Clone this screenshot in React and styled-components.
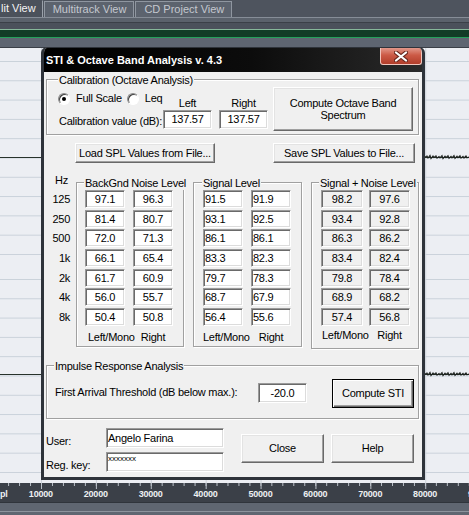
import React from 'react';
import styled, { createGlobalStyle } from 'styled-components';

const GlobalStyle = createGlobalStyle`
  html, body { margin: 0; padding: 0; overflow: hidden; background: #4f555f; }
  body { font-family: "Liberation Sans", Arial, sans-serif; }
`;

// data
const bands = ['125', '250', '500', '1k', '2k', '4k', '8k'];
const noise = [['97.1', '96.3'], ['81.4', '80.7'], ['72.0', '71.3'], ['66.1', '65.4'], ['61.7', '60.9'], ['56.0', '55.7'], ['50.4', '50.8']];
const signal = [['91.5', '91.9'], ['93.1', '92.5'], ['86.1', '86.1'], ['83.3', '82.3'], ['79.7', '78.3'], ['68.7', '67.9'], ['56.4', '55.6']];
const sumLevel = [['98.2', '97.6'], ['93.4', '92.8'], ['86.3', '86.2'], ['83.4', '82.4'], ['79.8', '78.4'], ['68.9', '68.2'], ['57.4', '56.8']];
const marks = [10000, 20000, 30000, 40000, 50000, 60000, 70000, 80000, 90000];

function Dialog() {
  return (
    <Window>
      <TitleBar>
        <TitleText>STI &amp; Octave Band Analysis v. 4.3</TitleText>
        <CloseBox>
          <svg width="14" height="11" viewBox="0 0 14 11">
            <path d="M2 1.5 L12 9.5 M12 1.5 L2 9.5" stroke="#6b2a20" strokeWidth="4.2" strokeLinecap="round" />
            <path d="M2 1.5 L12 9.5 M12 1.5 L2 9.5" stroke="#fff" strokeWidth="2.2" strokeLinecap="round" />
          </svg>
        </CloseBox>
      </TitleBar>

      <Body>
        <Group>
          <Legend $indent={11}>Calibration (Octave Analysis)</Legend>
          <CalibRow>
            <CalibGrid>
              <RadioRow>
                <RadioOption><Radio $checked />Full Scale</RadioOption>
                <RadioOption><Radio />Leq</RadioOption>
              </RadioRow>
              <ColHead>Left</ColHead>
              <ColHead>Right</ColHead>
              <RowLabel>Calibration value (dB):</RowLabel>
              <Field $h={19}>137.57</Field>
              <Field $h={19}>137.57</Field>
            </CalibGrid>
            <Button $w={140} $h={44} $lh={12.5}>Compute Octave Band<br />Spectrum</Button>
          </CalibRow>
        </Group>

        <FileRow>
          <Button $w={140} $h={20} $ml={29}>Load SPL Values from File...</Button>
          <Button $w={142} $h={20} $ml={58}>Save SPL Values to File...</Button>
        </FileRow>

        <Table>
          <HzCol>
            <HzHead>Hz</HzHead>
            {bands.map((b) => <HzCell key={b}>{b}</HzCell>)}
          </HzCol>

          <Group $w={108}>
            <Legend>BackGnd Noise Level</Legend>
            <ValueGrid $cols="40px 40px" $gap={8} $pl={8} $pr={10}>
              {noise.map(([l, r], i) => (
                <React.Fragment key={i}>
                  <Field>{l}</Field>
                  <Field>{r}</Field>
                </React.Fragment>
              ))}
              <ColFoot $shift={3}>Left/Mono</ColFoot>
              <ColFoot>Right</ColFoot>
            </ValueGrid>
          </Group>

          <Group $w={109} $ml={9}>
            <Legend $indent={8}>Signal Level</Legend>
            <ValueGrid $cols="40px 40px" $gap={8} $pl={9} $pr={10}>
              {signal.map(([l, r], i) => (
                <React.Fragment key={i}>
                  <Field $align="left">{l}</Field>
                  <Field $align="left">{r}</Field>
                </React.Fragment>
              ))}
              <ColFoot>Left/Mono</ColFoot>
              <ColFoot>Right</ColFoot>
            </ValueGrid>
          </Group>

          <Group $w={108} $ml={9}>
            <Legend>Signal + Noise Level</Legend>
            <ValueGrid $cols="42px 41px" $gap={6} $pl={9} $pr={8}>
              {sumLevel.map(([l, r], i) => (
                <React.Fragment key={i}>
                  <Field $readonly>{l}</Field>
                  <Field $readonly>{r}</Field>
                </React.Fragment>
              ))}
              <ColFoot $shift={1} $up>Left/Mono</ColFoot>
              <ColFoot $up>Right</ColFoot>
            </ValueGrid>
          </Group>
        </Table>

        <Group $mt={16}>
          <Legend>Impulse Response Analysis</Legend>
          <ImpulseRow>
            <ImpulseLabel>First Arrival Threshold (dB below max.):</ImpulseLabel>
            <Field $h={20} $w={49}>-20.0</Field>
            <Button $w={82} $h={29} $ml={25} $default>Compute STI</Button>
          </ImpulseRow>
        </Group>

        <Footer>
          <UserGrid>
            <UserLabel>User:</UserLabel>
            <Field $h={20} $align="left">Angelo Farina</Field>
            <UserLabel>Reg. key:</UserLabel>
            <KeyField $h={20} $align="left">xxxxxxx</KeyField>
          </UserGrid>
          <Button $w={83} $h={29} $ml={17} $mt={6}>Close</Button>
          <Button $w={83} $h={29} $ml={7} $mt={6}>Help</Button>
        </Footer>
      </Body>
    </Window>
  );
}

function Channel() {
  return (
    <Track>
      <Noise viewBox="0 0 44 6" preserveAspectRatio="none">
        <polyline
          points="0,3 2,2 3,4 5,1.5 6,4.5 8,2 9,3.5 11,1.8 12,4.2 14,2.5 15,3.8 17,1.5 18,4.6 20,2.2 21,3.6 23,1.7 24,4.3 26,2.4 27,3.9 29,1.6 30,4.4 32,2.1 33,3.7 35,1.8 36,4.1 38,2.3 39,4 41,1.9 42,3.8 44,3"
          fill="none"
          stroke="#1c211d"
          strokeWidth="1.1"
        />
      </Noise>
    </Track>
  );
}

export default function App() {
  return (
    <>
      <GlobalStyle />
      <Screen>
        <TabBar>
          <Tab $active>lit View</Tab>
          <Tab>Multitrack View</Tab>
          <Tab>CD Project View</Tab>
        </TabBar>
        <Strip $h={4} $bg="#5b626c" />
        <Strip $h={7} $bg="#4b515b" $top="#3b4048" />
        <GreenStrip />
        <Strip $h={10} $bg="#5e6571" $bottom="#3a3f47" />
        <Wave>
          <Channel />
          <Channel />
        </Wave>
        <Ruler>
          <RulerCell $first>pl</RulerCell>
          {marks.map((m) => <RulerCell key={m}>{m}</RulerCell>)}
        </Ruler>
        <BottomBar />
        <Dialog />
      </Screen>
    </>
  );
}

// ---------- background app ----------
const Screen = styled.div`
  position: relative;
  width: 469px;
  height: 515px;
  display: flex;
  flex-direction: column;
  overflow: hidden;
  background: #4f555f;
`;

const TabBar = styled.div`
  height: 17px;
  display: flex;
  align-items: flex-end;
  gap: 1px;
  background: #4e545e;
  border-bottom: 1px solid #868d97;
`;

const Tab = styled.div`
  box-sizing: border-box;
  height: ${(p) => (p.$active ? 17 : 16)}px;
  padding: ${(p) => (p.$active ? '0 6px 0 0' : '0 7px 0 8px')};
  font-size: 11px;
  line-height: 15px;
  white-space: nowrap;
  color: ${(p) => (p.$active ? '#f4f4f4' : '#c4c8ce')};
  background: ${(p) => (p.$active ? '#4b515b' : '#5c636e')};
  border: 1px solid;
  border-bottom: none;
  border-color: ${(p) => (p.$active ? 'transparent #9aa1aa transparent transparent' : '#8f96a0')};
`;

const Strip = styled.div`
  box-sizing: border-box;
  height: ${(p) => p.$h}px;
  background: ${(p) => p.$bg};
  border-top: ${(p) => (p.$top ? `1px solid ${p.$top}` : 'none')};
  border-bottom: ${(p) => (p.$bottom ? `1px solid ${p.$bottom}` : 'none')};
`;

const GreenStrip = styled.div`
  box-sizing: border-box;
  height: 9px;
  background: #123c27;
  border-top: 1px solid #86b79a;
  border-bottom: 1px solid #25a05c;
`;

const Wave = styled.div`
  flex: 1;
  display: flex;
  flex-direction: column;
`;

const Track = styled.div`
  position: relative;
  flex: 1;
  background-color: #eceef3;
  background-image:
    linear-gradient(to right, #cdd2da 0 1px, transparent 1px),
    linear-gradient(to bottom, #c9d1da 0 1px, transparent 1px);
  background-size: 54.9px 100%, 100% 19.3px;
  background-position: 41px 0, 0 13px;

  &::after {
    content: '';
    position: absolute;
    left: 0;
    right: 0;
    top: 50%;
    height: 1px;
    background: #27322b;
  }
`;

const Noise = styled.svg`
  position: absolute;
  right: 0;
  top: calc(50% - 3px);
  width: 44px;
  height: 6px;
  z-index: 1;
`;

const Ruler = styled.div`
  box-sizing: border-box;
  height: 19px;
  display: flex;
  padding-top: 5px;
  background-color: #3b4048;
  background-image:
    linear-gradient(to right, #b9bfc7 0 1px, transparent 1px),
    linear-gradient(to right, #b9bfc7 0 1px, transparent 1px);
  background-size: 54.9px 6px, 10.98px 3px;
  background-position: 41px 0, 41px 0;
  background-repeat: repeat-x;
  font-size: 9px;
  font-weight: bold;
  letter-spacing: -0.2px;
  color: #eef0f2;
  line-height: 12px;
`;

const RulerCell = styled.div`
  flex: 0 0 ${(p) => (p.$first ? '13.45px' : '54.9px')};
  text-align: ${(p) => (p.$first ? 'left' : 'center')};
  white-space: nowrap;
`;

const BottomBar = styled.div`
  height: 13px;
  background: linear-gradient(to bottom, #5f6671 0 8px, #8d949d 8px 9px, #5f6671 9px);
  border-top: 1px solid #2f343b;
  box-sizing: border-box;
`;

// ---------- dialog ----------
const Window = styled.div`
  position: absolute;
  left: 41px;
  top: 47px;
  width: 384px;
  height: 433px;
  box-sizing: border-box;
  display: flex;
  flex-direction: column;
  border: 3px solid #2e333a;
  border-top-width: 1px;
  border-radius: 6px 6px 0 0;
  background: #f0f0f0;
  font-size: 11px;
  letter-spacing: -0.25px;
  color: #000;
  overflow: hidden;
`;

const TitleBar = styled.div`
  height: 24px;
  display: flex;
  justify-content: space-between;
  align-items: flex-start;
  padding-left: 2px;
  background: linear-gradient(to right, #000 0%, #0c0c0c 55%, #2a2a2a 100%);
`;

const TitleText = styled.div`
  margin-top: 6px;
  color: #fff;
  font-weight: bold;
  font-size: 11px;
  letter-spacing: 0;
  white-space: nowrap;
`;

const CloseBox = styled.div`
  width: 42px;
  height: 17px;
  box-sizing: border-box;
  display: flex;
  align-items: center;
  justify-content: center;
  border: 1px solid #f1c6bd;
  border-top: none;
  border-radius: 0 0 3px 3px;
  background: linear-gradient(to bottom, #e2988a 0%, #cc5a46 45%, #b13d2a 100%);
`;

const Body = styled.div`
  flex: 1;
  display: flex;
  flex-direction: column;
  padding: 7px 3px 0 2px;
`;

const Group = styled.div`
  box-sizing: border-box;
  display: flex;
  flex-direction: column;
  width: ${(p) => (p.$w ? `${p.$w}px` : 'auto')};
  margin-left: ${(p) => p.$ml || 0}px;
  margin-top: ${(p) => p.$mt || 0}px;
  border: 1px solid #a0a0a0;
  box-shadow: inset 1px 1px 0 #fff, 1px 1px 0 #fff;
`;

const Legend = styled.div`
  align-self: flex-start;
  height: 14px;
  line-height: 14px;
  margin: -7px 0 0 ${(p) => (p.$indent ?? 7)}px;
  padding: 0 1px;
  background: #f0f0f0;
  white-space: nowrap;
  position: relative;
`;

const CalibRow = styled.div`
  display: flex;
  gap: 5px;
  padding: 0 4px 3px 12px;
`;

const CalibGrid = styled.div`
  width: 209px;
  display: grid;
  grid-template-columns: 97px 49px 49px;
  grid-template-rows: 23px 19px;
  column-gap: 7px;
`;

const RadioRow = styled.div`
  display: flex;
  gap: 5px;
  margin-top: 5px;
  height: 13px;
  white-space: nowrap;
  margin-left: -1px;
`;

const RadioOption = styled.div`
  display: flex;
  align-items: center;
  gap: 6px;
  line-height: 13px;
`;

const Radio = styled.span`
  position: relative;
  width: 12px;
  height: 12px;
  box-sizing: border-box;
  border-radius: 50%;
  border: 1px solid;
  border-color: #8a8a8a #fff #fff #8a8a8a;
  box-shadow: inset 1px 1px 0 #404040;
  background: #fff;

  &::after {
    content: '';
    display: ${(p) => (p.$checked ? 'block' : 'none')};
    position: absolute;
    left: 3px;
    top: 3px;
    width: 4px;
    height: 4px;
    border-radius: 50%;
    background: #000;
  }
`;

const ColHead = styled.div`
  align-self: end;
  text-align: center;
  line-height: 13px;
`;

const RowLabel = styled.div`
  line-height: 19px;
  padding-top: 2px;
  white-space: nowrap;
`;

const Field = styled.div`
  box-sizing: border-box;
  height: ${(p) => p.$h || 18}px;
  width: ${(p) => (p.$w ? `${p.$w}px` : 'auto')};
  padding: 0 ${(p) => (p.$align === 'left' ? 1 : 2)}px;
  border: 1px solid;
  border-color: #9a9a9a #fff #fff #9a9a9a;
  box-shadow: inset 1px 1px 0 #6a6a6a, inset -1px -1px 0 #dcdcdc;
  background: ${(p) => (p.$readonly ? '#f0f0f0' : '#fff')};
  text-align: ${(p) => p.$align || 'center'};
  line-height: ${(p) => (p.$h || 18) - 2}px;
  white-space: nowrap;
  overflow: hidden;
`;

const KeyField = styled(Field)`
  font-size: 8px;
  line-height: 10px;
  letter-spacing: 0;
  padding-top: 1px;
`;

const Button = styled.button`
  box-sizing: border-box;
  flex: none;
  width: ${(p) => p.$w}px;
  height: ${(p) => p.$h}px;
  margin: ${(p) => p.$mt || 0}px 0 0 ${(p) => p.$ml || 0}px;
  padding: 0;
  font: inherit;
  font-size: 11px;
  letter-spacing: -0.25px;
  line-height: ${(p) => p.$lh || 13}px;
  color: #000;
  background: #f0f0f0;
  border: 1px solid;
  border-color: ${(p) => (p.$default ? '#000' : '#fff #696969 #696969 #fff')};
  box-shadow: ${(p) =>
    p.$default
      ? 'inset 1px 1px 0 #fff, inset -1px -1px 0 #696969, inset -2px -2px 0 #a0a0a0'
      : 'inset -1px -1px 0 #a0a0a0, inset 1px 1px 0 #e3e3e3'};
  white-space: nowrap;
`;

const FileRow = styled.div`
  display: flex;
  margin-top: 8px;
`;

const Table = styled.div`
  display: flex;
  align-items: flex-start;
  margin-top: 19px;
`;

const HzCol = styled.div`
  box-sizing: border-box;
  width: 30px;
  display: flex;
  flex-direction: column;
  gap: 1.67px;
  padding-right: 6px;
  text-align: right;
`;

const HzHead = styled.div`
  height: 16px;
  line-height: 13px;
  margin: -8px 2px -1.67px 0;
`;

const HzCell = styled.div`
  height: 18px;
  line-height: 18px;
`;

const ValueGrid = styled.div`
  display: grid;
  grid-template-columns: ${(p) => p.$cols};
  column-gap: ${(p) => p.$gap}px;
  row-gap: 1.67px;
  padding: 0 ${(p) => p.$pr}px 0 ${(p) => p.$pl}px;
`;

const ColFoot = styled.div`
  height: ${(p) => (p.$up ? 20 : 18.33)}px;
  line-height: ${(p) => (p.$up ? 14 : 18)}px;
  text-align: center;
  white-space: nowrap;
  position: relative;
  left: ${(p) => p.$shift || 0}px;
`;

const ImpulseRow = styled.div`
  display: flex;
  align-items: center;
  padding: 6px 4px 10px 8px;
`;

const ImpulseLabel = styled.div`
  flex: 1;
  margin-top: -3px;
  white-space: nowrap;
`;

const Footer = styled.div`
  display: flex;
  align-items: flex-start;
  margin-top: 9px;
`;

const UserGrid = styled.div`
  display: grid;
  grid-template-columns: 60px 118px;
  grid-template-rows: 20px 20px;
  row-gap: 4px;
`;

const UserLabel = styled.div`
  padding-top: 5px;
  line-height: 16px;
  white-space: nowrap;
`;
